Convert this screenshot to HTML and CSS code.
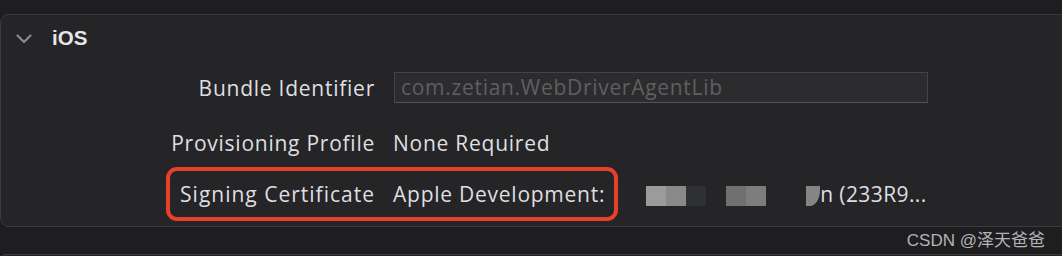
FILE: index.html
```html
<!DOCTYPE html>
<html lang="zh">

<head>
    <meta charset="UTF-8">
    <title>Signing</title>
    <link rel="stylesheet" href="styles.css">
</head>

<body>
    <div class="page">
        <div class="panel">
            <div class="panel-head">
                <svg class="chevron" width="16" height="10" viewBox="0 0 16 10">
                    <path d="M1.5 1.5 L8 8 L14.5 1.5" fill="none" stroke="#8a8a8c" stroke-width="2.2" stroke-linecap="round" stroke-linejoin="round"/>
                </svg>
                <span class="title">iOS</span>
            </div>
            <div class="rows">
                <div class="row row-field">
                    <div class="label">Bundle Identifier</div>
                    <div class="value">
                        <div class="field">com.zetian.WebDriverAgentLib</div>
                    </div>
                </div>
                <div class="row row-prov">
                    <div class="label">Provisioning Profile</div>
                    <div class="value">None Required</div>
                </div>
                <div class="row row-cert">
                    <div class="label">Signing Certificate</div>
                    <div class="value">
                        <span>Apple Development:</span>
                        <span class="blur first">
                            <i style="background:#9b9b9c"></i><i style="background:#89898a"></i><i style="background:#2f3032"></i>
                        </span>
                        <span class="blur">
                            <i style="background:#707071"></i><i style="background:#7d7d7e"></i>
                        </span>
                        <span class="blur last"><i class="tail" style="background:#858586"></i></span>
                        <span class="rest">n (233R9...</span>
                    </div>
                </div>
                <div class="mark"></div>
            </div>
        </div>
        <div class="footer">CSDN @泽天爸爸</div>
        <div class="panel next"></div>
    </div>
</body>

</html>
```

FILE: styles.css
```css
html,
body {
    margin: 0;
    padding: 0;
    overflow: hidden;
}

body {
    background: #1e1e20;
    font-family: "Open Sans", "Liberation Sans", "Noto Sans CJK SC", sans-serif;
    color: #dfdfe0;
}

.page {
    height: 256px;
    overflow: hidden;
}

.panel {
    margin-top: 14px;
    margin-right: -20px;
    height: 211px;
    background: #252527;
    border: 1px solid #3b3b3d;
    border-radius: 9px;
}

.panel-head {
    display: flex;
    align-items: center;
    height: 45px;
    padding-left: 15px;
}

.chevron {
    margin-top: 3px;
}

.title {
    margin-left: 20px;
    font-family: "Liberation Sans", Arial, sans-serif;
    font-size: 20.5px;
    font-weight: bold;
    color: #e6e6e7;
}

.rows {
    position: relative;
}

.row {
    display: flex;
    align-items: center;
    font-size: 21px;
    letter-spacing: 0.75px;
}

.label {
    width: 374px;
    text-align: right;
    flex-shrink: 0;
}

.row-cert .label {
    letter-spacing: 1px;
}

.value {
    display: flex;
    align-items: center;
    margin-left: 18px;
    white-space: nowrap;
}

.row-field {
    height: 56px;
}

.field {
    width: 526px;
    height: 29px;
    line-height: 29px;
    padding-left: 6px;
    background: #2c2c2e;
    border: 1px solid #444446;
    border-bottom-color: #555557;
    color: #5f5f61;
    letter-spacing: 0.7px;
    margin-left: 1px;
    margin-top: -2px;
}

.row-prov {
    height: 53px;
}

.row-cert {
    height: 50px;
}

.blur {
    display: flex;
    height: 20px;
    margin-top: 4px;
    margin-left: 20px;
}

.blur.first {
    margin-left: 41px;
}

.blur.last {
    margin-left: 40px;
}

.blur i {
    width: 20px;
    height: 20px;
}

.blur .tail {
    width: 14px;
    border-bottom-right-radius: 10px 16px;
}

.rest {
    letter-spacing: 0.4px;
}

.mark {
    position: absolute;
    left: 165px;
    top: 107px;
    width: 444px;
    height: 46px;
    border: 4px solid #e8402a;
    border-radius: 11px;
}

.footer {
    height: 27px;
    line-height: 27px;
    text-align: right;
    padding-right: 17px;
    font-family: "Liberation Sans", "Noto Sans CJK SC", sans-serif;
    font-size: 17px;
    color: #b3b3b4;
}

.next {
    margin-top: 0;
    height: 10px;
}
```
